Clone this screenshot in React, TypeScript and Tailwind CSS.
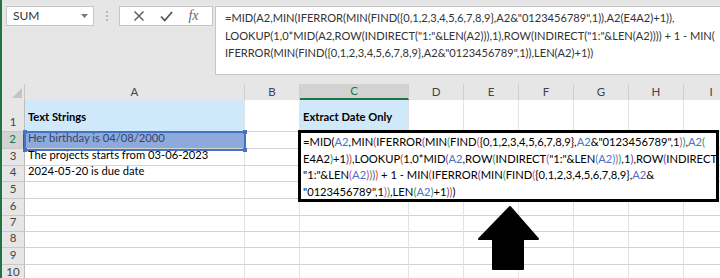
import type { ReactNode } from 'react';

const PAREN = ['#000000', '#000000', '#e2392b', '#7b3ea3', '#1f9d57', '#d53fb9', '#3a8fd0', '#a0522d'];

// colours parentheses by nesting depth and A2 references, like Excel's edit mode
function colorize(lines: string[]) {
  let depth = 0;
  return lines.map((line) => {
    const out: ReactNode[] = [];
    let buf = '';
    let k = 0;
    const flush = () => {
      if (buf) out.push(<span key={k++}>{buf}</span>);
      buf = '';
    };
    for (let i = 0; i < line.length; i++) {
      const ch = line[i];
      const prev = i > 0 ? line[i - 1] : '';
      if (ch === '(') {
        flush();
        depth++;
        out.push(<span key={k++} style={{ color: PAREN[depth % PAREN.length] }}>(</span>);
      } else if (ch === ')') {
        flush();
        out.push(<span key={k++} style={{ color: PAREN[depth % PAREN.length] }}>)</span>);
        depth--;
      } else if (line.startsWith('A2', i) && !/[A-Z0-9]/.test(prev)) {
        flush();
        out.push(<span key={k++} className="text-[#4472c4]">A2</span>);
        i++;
      } else {
        buf += ch;
      }
    }
    flush();
    return out;
  });
}

const barLines = [
  '=MID(A2,MIN(IFERROR(MIN(FIND({0,1,2,3,4,5,6,7,8,9},A2&"0123456789",1)),A2(E4A2)+1)),',
  'LOOKUP(1,0*MID(A2,ROW(INDIRECT("1:"&LEN(A2))),1),ROW(INDIRECT("1:"&LEN(A2)))) + 1 - MIN(',
  'IFERROR(MIN(FIND({0,1,2,3,4,5,6,7,8,9},A2&"0123456789",1)),LEN(A2)+1))',
];

const cellLines = [
  '=MID(A2,MIN(IFERROR(MIN(FIND({0,1,2,3,4,5,6,7,8,9},A2&"0123456789",1)),A2(',
  'E4A2)+1)),LOOKUP(1,0*MID(A2,ROW(INDIRECT("1:"&LEN(A2))),1),ROW(INDIRECT(',
  '"1:"&LEN(A2)))) + 1 - MIN(IFERROR(MIN(FIND({0,1,2,3,4,5,6,7,8,9},A2&',
  '"0123456789",1)),LEN(A2)+1)))',
];

const cols = [
  { label: 'A', w: 'w-[220px]' },
  { label: 'B', w: 'w-[55px]' },
  { label: 'C', w: 'w-[109px]' },
  { label: 'D', w: 'w-[55px]' },
  { label: 'E', w: 'w-[55px]' },
  { label: 'F', w: 'w-[55px]' },
  { label: 'G', w: 'w-[55px]' },
  { label: 'H', w: 'w-[55px]' },
  { label: 'I', w: 'w-[55px]' },
];

const rows = [
  { n: 1, h: 'h-[32px]', a: 'Text Strings', c: 'Extract Date Only' },
  { n: 2, h: 'h-[17px]', a: 'Her birthday is 04/08/2000' },
  { n: 3, h: 'h-[17px]', a: 'The projects starts from 03-06-2023' },
  { n: 4, h: 'h-[16px]', a: '2024-05-20 is due date' },
  { n: 5, h: 'h-[17px]' },
  { n: 6, h: 'h-[17px]' },
  { n: 7, h: 'h-[16px]' },
  { n: 8, h: 'h-[16px]' },
  { n: 9, h: 'h-[17px]' },
  { n: 10, h: 'h-[17px]' },
];

function Toolbar() {
  return (
    <div className="h-[84px] bg-[#e6e6e6] flex items-start pt-[6px] shrink-0">
      <div className="ml-[4px] w-[88px] h-[20px] bg-white border border-[#c6c6c6] flex items-center pl-[6px] text-[12px] text-[#333]">
        <span className="flex-1">SUM</span>
        <svg width="7" height="4" viewBox="0 0 7 4" className="mr-[5px]">
          <path d="M0 0h7L3.5 4z" fill="#777" />
        </svg>
      </div>
      <div className="w-[25px] h-[20px] flex flex-col items-center justify-center gap-[2px]">
        <div className="w-[2px] h-[2px] bg-[#b5b5b5]" />
        <div className="w-[2px] h-[2px] bg-[#b5b5b5]" />
        <div className="w-[2px] h-[2px] bg-[#b5b5b5]" />
      </div>
      <div className="w-[94px] h-[20px] bg-white border border-[#c6c6c6] flex items-center justify-around px-[6px]">
        <svg width="12" height="12" viewBox="0 0 12 12">
          <path d="M1.5 1.5l9 9M10.5 1.5l-9 9" stroke="#555" strokeWidth="1.4" />
        </svg>
        <svg width="13" height="11" viewBox="0 0 13 11">
          <path d="M1 5.5l3.8 4L12 1" stroke="#555" strokeWidth="1.8" fill="none" />
        </svg>
        <span className="text-[14px] italic text-[#666] font-['Liberation_Serif',serif] leading-none">fx</span>
      </div>
      <div className="ml-[2px] flex-1 h-[69px] bg-white border border-[#c6c6c6] border-r-0 pl-[9px] pt-[2px] text-[11.1px] leading-[17.5px] text-[#333] whitespace-nowrap overflow-hidden">
        {barLines.map((l) => (
          <div key={l}>{l}</div>
        ))}
      </div>
    </div>
  );
}

function Grid() {
  return (
    <div className="flex flex-col">
      <div className="flex h-[16px] bg-[#e6e6e6] text-[11.5px] text-[#444]">
        <div className="w-[23px] shrink-0 border-r border-[#c8c8c8] relative">
          <svg width="10" height="10" viewBox="0 0 10 10" className="absolute right-[2px] bottom-[2px]">
            <path d="M10 0V10H0z" fill="#c4c4c4" />
          </svg>
        </div>
        {cols.map((c) => (
          <div
            key={c.label}
            className={`${c.w} shrink-0 flex items-center justify-center border-r border-[#d0d0d0] ${
              c.label === 'C' ? 'bg-[#d2d2d2] text-[#217346] border-b-2 border-b-[#217346]' : ''
            }`}
          >
            {c.label}
          </div>
        ))}
      </div>
      {rows.map((r) => (
        <div key={r.n} className={`flex ${r.h} text-[11.2px]`}>
          <div
            className={`w-[23px] shrink-0 flex items-end justify-center pb-[1px] border-b border-[#c8c8c8] text-[11.5px] ${
              r.n === 2
                ? 'bg-[#d2d2d2] text-[#217346] border-r-2 border-r-[#217346]'
                : 'bg-[#e6e6e6] text-[#444] border-r border-r-[#bdbdbd]'
            }`}
          >
            {r.n}
          </div>
          {cols.map((c) => {
            const isA = c.label === 'A';
            const isC = c.label === 'C';
            const header = r.n === 1 && (isA || isC);
            const sel = r.n === 2 && isA;
            const text = isA ? r.a : isC ? r.c : undefined;
            return (
              <div
                key={c.label}
                className={`${c.w} shrink-0 flex items-end pl-[3px] pb-[1px] whitespace-nowrap border-b border-[#d4d4d4] border-r border-r-[#e2e2e2] ${
                  header ? 'bg-[#cfe8fa] font-bold pb-[5px]' : sel ? 'bg-[#8eaadb] text-[#34466e]' : 'bg-white text-black'
                }`}
              >
                {text}
              </div>
            );
          })}
        </div>
      ))}
    </div>
  );
}

export default function App() {
  const cell = colorize(cellLines);
  return (
    <div className="w-[720px] h-[278px] overflow-hidden relative bg-white border-l-2 border-[#217346] font-['Lato',sans-serif] flex flex-col">
      <Toolbar />
      <Grid />

      {/* reference highlight round A2 */}
      <div className="absolute left-[22px] top-[131px] w-[222px] h-[20px] border-2 border-[#4472c4] pointer-events-none">
        <div className="absolute -left-[3px] -top-[3px] w-[4px] h-[4px] bg-[#4472c4]" />
        <div className="absolute -right-[3px] -top-[3px] w-[4px] h-[4px] bg-[#4472c4]" />
        <div className="absolute -left-[3px] -bottom-[3px] w-[4px] h-[4px] bg-[#4472c4]" />
        <div className="absolute -right-[3px] -bottom-[3px] w-[4px] h-[4px] bg-[#4472c4]" />
      </div>

      {/* cell C2 in edit mode */}
      <div className="absolute left-[296px] top-[130px] w-[421px] h-[72px] bg-white border-[3px] border-black pt-[1px] pl-[2px] text-[11.2px] leading-[16.7px] text-black whitespace-nowrap overflow-hidden">
        {cell.map((l, i) => (
          <div key={i}>{l}</div>
        ))}
      </div>

      {/* big arrow */}
      <svg width="66" height="68" viewBox="0 0 66 68" className="absolute left-[474px] top-[204px]">
        <path d="M34 3L3 35H17V65H47V35H62Z" fill="black" stroke="black" strokeWidth="2" strokeLinejoin="round" />
      </svg>
    </div>
  );
}
